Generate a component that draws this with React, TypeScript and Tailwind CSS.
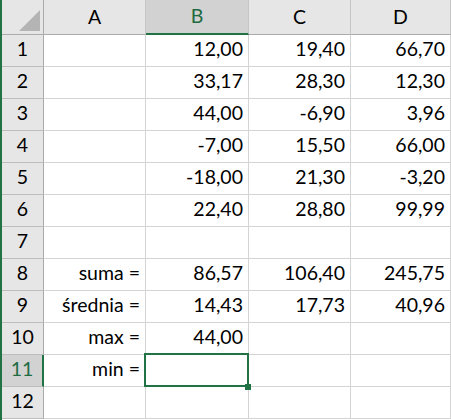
import React from 'react';

const cols = ['A', 'B', 'C', 'D'];

const rows: string[][] = [
  ['', '12,00', '19,40', '66,70'],
  ['', '33,17', '28,30', '12,30'],
  ['', '44,00', '-6,90', '3,96'],
  ['', '-7,00', '15,50', '66,00'],
  ['', '-18,00', '21,30', '-3,20'],
  ['', '22,40', '28,80', '99,99'],
  ['', '', '', ''],
  ['suma =', '86,57', '106,40', '245,75'],
  ['średnia =', '14,43', '17,73', '40,96'],
  ['max =', '44,00', '', ''],
  ['min =', '', '', ''],
  ['', '', '', ''],
];

const colWidths = ['w-[102px]', 'w-[103px]', 'w-[102px]', 'flex-1'];

export default function App() {
  return (
    <div
      className="w-[451px] h-[420px] overflow-hidden bg-white border-l-2 border-[#217346] text-[19.5px] text-black"
      style={{ fontFamily: 'Lato, "Liberation Sans", sans-serif' }}
    >
      {/* column headers */}
      <div className="flex h-[35px] bg-[#e6e6e6]">
        <div className="relative w-[42px] shrink-0 border-r border-b border-[#ababab]">
          <div className="absolute right-[3px] bottom-[3px] w-0 h-0 border-l-[21px] border-l-transparent border-b-[21px] border-b-[#b4b4b4]" />
        </div>
        {cols.map((c, i) => (
          <div
            key={c}
            className={`${colWidths[i]} shrink-0 flex items-end justify-center pb-[3px] border-r border-[#c6c6c6] ${
              c === 'B'
                ? 'bg-[#d2d2d2] text-[#1e6b41] border-b-2 border-b-[#217346]'
                : 'border-b border-b-[#ababab]'
            }`}
          >
            {c}
          </div>
        ))}
      </div>

      {rows.map((r, ri) => {
        const n = ri + 1;
        const sel = n === 11;
        return (
          <div key={n} className="flex h-[32px]">
            <div
              className={`w-[42px] shrink-0 flex items-end justify-center pb-[3px] border-b border-[#bdbdbd] ${
                sel
                  ? 'bg-[#d2d2d2] text-[#1e6b41] border-r-2 border-r-[#217346]'
                  : 'bg-[#e6e6e6] border-r border-r-[#ababab]'
              }`}
            >
              {n}
            </div>
            {r.map((v, ci) => {
              const active = sel && ci === 1;
              return (
                <div
                  key={ci}
                  className={`${colWidths[ci]} shrink-0 relative flex items-end justify-end pr-[5px] pb-[3px] border-r border-b border-[#d4d4d4] whitespace-nowrap`}
                >
                  {v}
                  {active && (
                    <>
                      <div className="absolute z-10 -left-[2px] -top-[2px] -right-[1px] -bottom-[1px] border-2 border-[#217346]" />
                      <div className="absolute z-20 -right-[3px] -bottom-[4px] w-[6px] h-[6px] bg-[#217346]" />
                    </>
                  )}
                </div>
              );
            })}
          </div>
        );
      })}
    </div>
  );
}
